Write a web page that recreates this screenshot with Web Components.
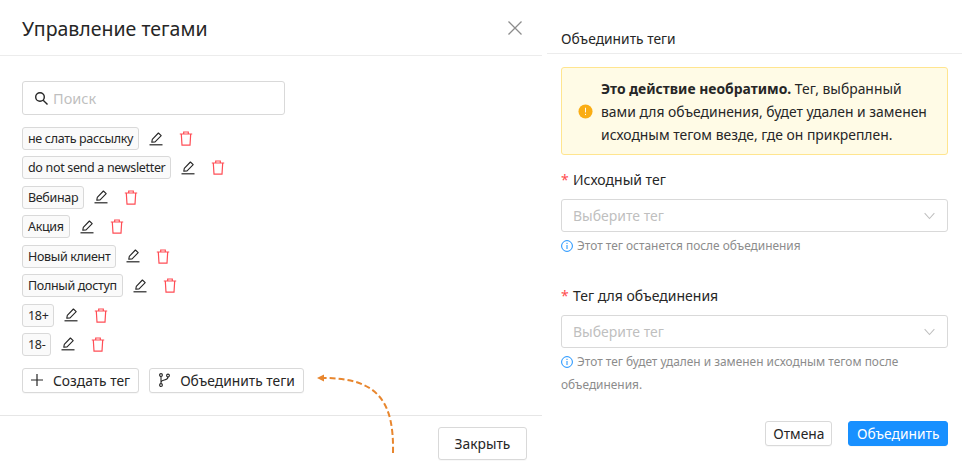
<!DOCTYPE html>
<html lang="ru">
<head>
<meta charset="utf-8">
<style>
  html, body { margin: 0; padding: 0; background: #fff; }
  body { font-family: "Noto Sans", "Open Sans", sans-serif; color: #262626; width: 962px; height: 467px; overflow: hidden; }
</style>
</head>
<body>
<tags-page></tags-page>
<script>
const ICONS = {
  edit: `<svg width="14" height="14" viewBox="0 0 14 14" fill="none" stroke="#262626" stroke-width="1.1"><path d="M2.8 10.2 3.3 7.4 9.4 1l2.8 2.6-6.1 6.3z" stroke-linejoin="round"/><path d="M.5 12.8h13" stroke-width="1.2"/></svg>`,
  trash: `<svg width="14" height="15" viewBox="0 0 14 15" fill="none" stroke="#ff4d55" stroke-width="1.2"><path d="M.8 3h12.4M4.7 3V1h4.6v2M2.3 3l.7 11.2h8l.7-11.2"/></svg>`,
  plus: `<svg width="12" height="12" viewBox="0 0 12 12" fill="none" stroke="#262626" stroke-width="1.2"><path d="M6 0v12M0 6h12"/></svg>`,
  branch: `<svg width="11" height="14" viewBox="0 0 11 14" fill="none" stroke="#262626" stroke-width="1.1"><circle cx="2" cy="2" r="1.4"/><circle cx="2" cy="12" r="1.4"/><circle cx="9" cy="2.5" r="1.4"/><path d="M2 3.4v7.2M2 9.5c0-3.5 7-1.5 7-5.6"/></svg>`,
  search: `<svg width="15" height="15" viewBox="0 0 15 15" fill="none" stroke="#262626" stroke-width="1.4"><circle cx="6" cy="6" r="4.3"/><path d="m9.2 9.2 4.3 4.3"/></svg>`,
  close: `<svg width="14" height="14" viewBox="0 0 14 14" fill="none" stroke="#8c8c8c" stroke-width="1.3"><path d="m.5.5 13 13M13.5.5l-13 13"/></svg>`,
  info: `<svg width="12" height="12" viewBox="0 0 12 12" fill="none" stroke="#1890ff"><circle cx="6" cy="6" r="5.4"/><path d="M6 5v4M6 2.8V4"/></svg>`,
  chevron: `<svg width="11" height="8" viewBox="0 0 12 8" fill="none" stroke="#bfbfbf" stroke-width="1.1"><path d="m.7.8 5.3 6 5.3-6"/></svg>`
};

// one tag of the list, with its edit and delete icons
class TagRow extends HTMLElement {
  constructor() {
    super();
    this.attachShadow({ mode: "open" });
    this.shadowRoot.innerHTML = `
      <style>
        :host { display: flex; align-items: center; height: 23px; }
        .tag { box-sizing: border-box; height: 23px; padding: 0 5px; display: flex; align-items: center; white-space: nowrap;
          border: 1px solid #d9d9d9; border-radius: 3px; background: #fafafa; font-size: 12.5px; letter-spacing: -.33px; color: #262626; }
        .edit { margin-left: 10px; display: flex; }
        .trash { margin-left: 16px; display: flex; }
      </style>
      <span class="tag"><slot></slot></span>
      <span class="edit">${ICONS.edit}</span>
      <span class="trash">${ICONS.trash}</span>`;
  }
}

class UiButton extends HTMLElement {
  constructor() {
    super();
    this.attachShadow({ mode: "open" });
    this.shadowRoot.innerHTML = `
      <style>
        :host { display: inline-flex; box-sizing: border-box; align-items: center; justify-content: center; white-space: nowrap;
          border: 1px solid #d9d9d9; border-radius: 3px; background: #fff; color: #262626; font-size: 13.8px; height: 25px; padding: 0 8px; box-shadow: 0 1px 1px rgba(0,0,0,.03); }
        :host([primary]) { background: #1890ff; border-color: #1890ff; color: #fff; }
      </style>
      <slot name="icon"></slot><slot></slot>`;
  }
}

class SelectField extends HTMLElement {
  constructor() {
    super();
    this.attachShadow({ mode: "open" });
    this.shadowRoot.innerHTML = `
      <style>
        :host { display: block; }
        .label { height: 18px; display: flex; align-items: center; font-size: 14px; color: #262626; }
        .req { color: #ff4d4f; width: 12px; font-size: 14px; }
        .box { box-sizing: border-box; height: 33px; margin-top: 11px; padding: 0 12px 0 11px; display: flex; align-items: center; justify-content: space-between;
          border: 1px solid #d9d9d9; border-radius: 3px; color: #bfbfbf; font-size: 14px; }
        .hint { margin-top: 1.5px; font-size: 11.9px; line-height: 23px; color: #8c8c8c; }
        .hint svg { vertical-align: -2px; margin-right: 1px; }
      </style>
      <div class="label"><span class="req">*</span><span>${this.getAttribute("label")}</span></div>
      <div class="box"><span>Выберите тег</span>${ICONS.chevron}</div>
      <div class="hint">${ICONS.info} <slot></slot></div>`;
  }
}

class TagsManager extends HTMLElement {
  constructor() {
    super();
    this.attachShadow({ mode: "open" });
    this.shadowRoot.innerHTML = `
      <style>
        :host { display: flex; flex-direction: column; width: 542px; height: 467px; box-sizing: border-box; flex: none; }
        header { box-sizing: border-box; height: 56px; border-bottom: 1px solid #ececec; padding: 0 20px 0 22px; display: flex; align-items: center; justify-content: space-between; }
        h2 { margin: 2px 0 0; font-weight: 400; font-size: 19.5px; color: #262626; }
        main { box-sizing: border-box; height: 360px; border-bottom: 1px solid #e6e6e6; padding: 25px 22px 0; }
        .search { box-sizing: border-box; width: 263px; height: 34px; border: 1px solid #d9d9d9; border-radius: 3px; display: flex; align-items: center; gap: 4px; padding-left: 11px; font-size: 14.5px; color: #bfbfbf; }
        .search span { display: flex; }
        .list { margin-top: 12px; display: flex; flex-direction: column; gap: 6.43px; }
        .actions { margin-top: 12px; display: flex; gap: 10px; }
        .actions ui-button:last-child { padding: 0 8.5px 0 9px; }
        footer { flex: 1; display: flex; justify-content: flex-end; padding: 11px 15px 0 0; align-items: flex-start; }
        .gap { margin-right: 10px; display: flex; }
        #close-btn { height: 33px; width: 89px; }
      </style>
      <header><h2>Управление тегами</h2><span style="display:flex">${ICONS.close}</span></header>
      <main>
        <div class="search"><span>${ICONS.search}</span>Поиск</div>
        <div class="list">
          <tag-row>не слать рассылку</tag-row>
          <tag-row>do not send a newsletter</tag-row>
          <tag-row>Вебинар</tag-row>
          <tag-row>Акция</tag-row>
          <tag-row>Новый клиент</tag-row>
          <tag-row>Полный доступ</tag-row>
          <tag-row>18+</tag-row>
          <tag-row>18-</tag-row>
        </div>
        <div class="actions">
          <ui-button><span class="gap" slot="icon">${ICONS.plus}</span>Создать тег</ui-button>
          <ui-button><span class="gap" slot="icon">${ICONS.branch}</span>Объединить теги</ui-button>
        </div>
      </main>
      <footer><ui-button id="close-btn">Закрыть</ui-button></footer>`;
  }
}

class MergePanel extends HTMLElement {
  constructor() {
    super();
    this.attachShadow({ mode: "open" });
    this.shadowRoot.innerHTML = `
      <style>
        :host { display: block; width: 415px; box-sizing: border-box; flex: none; margin-left: 5px; }
        .head { box-sizing: border-box; height: 54px; border-bottom: 1px solid #ececec; padding: 29px 0 0 14px; font-size: 13.8px; line-height: 20px; color: #262626; }
        .body { padding: 13px 14px 0; }
        .alert { box-sizing: border-box; height: 88px; background: #fffbe6; border: 1px solid #ffe58f; border-radius: 3px; display: flex; align-items: center; padding-left: 16px; font-size: 13.9px; line-height: 23px; color: #262626; }
        .alert svg { flex: none; margin-right: 8px; }
        b { font-weight: 700; }
        select-field { margin-top: 15px; }
        select-field + select-field { margin-top: 29.5px; }
        .buttons { display: flex; justify-content: flex-end; gap: 16px; margin-top: 25.5px; }
        .buttons ui-button { padding: 0 7px; }
        .buttons ui-button[primary] { padding: 0 7.5px; }
      </style>
      <div class="head">Объединить теги</div>
      <div class="body">
        <div class="alert">
          <svg width="15" height="15" viewBox="0 0 16 16"><circle cx="8" cy="8" r="7.5" fill="#faad14"/><path d="M8 4v5M8 10.5v1.3" stroke="#fff" stroke-width="1"/></svg>
          <div><b>Это действие необратимо.</b> Тег, выбранный<br>вами для объединения, будет удален и заменен<br>исходным тегом везде, где он прикреплен.</div>
        </div>
        <select-field label="Исходный тег">Этот тег останется после объединения</select-field>
        <select-field label="Тег для объединения">Этот тег будет удален и заменен исходным тегом после<br>объединения.</select-field>
        <div class="buttons"><ui-button>Отмена</ui-button><ui-button primary>Объединить</ui-button></div>
      </div>`;
  }
}

class TagsPage extends HTMLElement {
  constructor() {
    super();
    this.attachShadow({ mode: "open" });
    this.shadowRoot.innerHTML = `
      <style>
        :host { display: flex; position: relative; width: 962px; height: 467px; }
        svg { position: absolute; left: 310px; top: 370px; }
      </style>
      <tags-manager></tags-manager>
      <merge-panel></merge-panel>
      <svg width="90" height="90" viewBox="0 0 90 90" fill="none">
        <path d="M83 83C84 34 70 8 14 8" stroke="#e8862e" stroke-width="2" stroke-dasharray="6 3"/>
        <path d="M7 8l7-3.5v7z" fill="#e8862e"/>
      </svg>`;
  }
}

customElements.define("tag-row", TagRow);
customElements.define("ui-button", UiButton);
customElements.define("select-field", SelectField);
customElements.define("tags-manager", TagsManager);
customElements.define("merge-panel", MergePanel);
customElements.define("tags-page", TagsPage);
</script>
</body>
</html>
